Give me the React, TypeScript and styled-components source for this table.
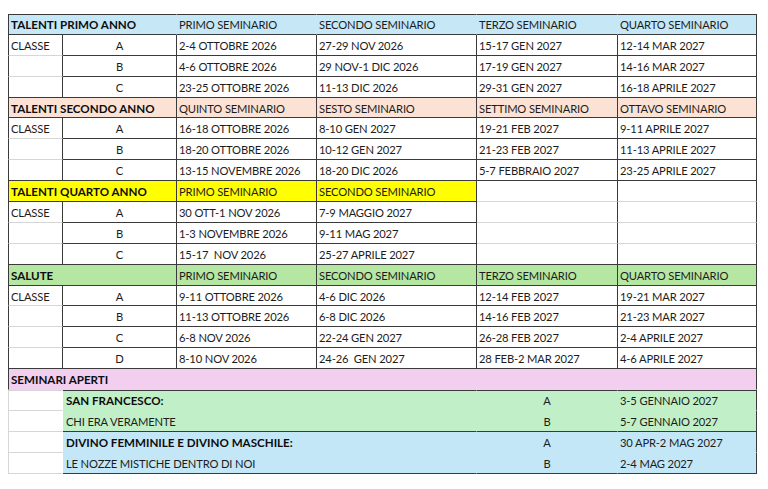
import React from "react";
import styled, { createGlobalStyle } from "styled-components";

const DARK = "#3a3a3a";
const LIGHT = "#d6d6d6";

type Edge = "dark" | "light" | "none";
const edge = (e?: Edge) =>
  e === "dark" ? `1px solid ${DARK}` : e === "light" ? `1px solid ${LIGHT}` : "1px solid transparent";

const Global = createGlobalStyle`
  html, body { margin: 0; padding: 0; background: #ffffff; }
  body { font-family: Lato, "Open Sans", "Liberation Sans", sans-serif; }
`;

const Page = styled.div`
  padding: 14px 0 0 8px;
  width: 768px;
  height: 489px;
  box-sizing: border-box;
`;

const Sheet = styled.div`
  display: grid;
  grid-template-columns: 55px 114px 140px 160px 141px 139px;
  grid-auto-rows: 20.9px;
  width: 749px;
`;

type CellProps = {
  $span?: number;
  $bg?: string;
  $bold?: boolean;
  $center?: boolean;
  $right?: Edge;
  $bottom?: Edge;
  $left?: Edge;
  $top?: Edge;
  $indent?: number;
};

const Cell = styled.div<CellProps>`
  grid-column: span ${(p) => p.$span ?? 1};
  background: ${(p) => p.$bg ?? "#ffffff"};
  border-right: ${(p) => edge(p.$right)};
  border-bottom: ${(p) => edge(p.$bottom)};
  border-left: ${(p) => (p.$left ? edge(p.$left) : "none")};
  border-top: ${(p) => (p.$top ? edge(p.$top) : "none")};
  box-sizing: border-box;
  display: flex;
  align-items: center;
  justify-content: ${(p) => (p.$center ? "center" : "flex-start")};
  padding: 1px 0 0 ${(p) => p.$indent ?? 2}px;
  font-size: ${(p) => (p.$bold ? "11.6px" : "11.2px")};
  font-weight: ${(p) => (p.$bold ? 700 : 400)};
  color: ${(p) => (p.$bold ? "#0d0d0d" : "#1c1c1c")};
  white-space: pre;
  overflow: hidden;
  letter-spacing: ${(p) => (p.$bold ? "0" : "-0.15px")};
`;

type Section = {
  title: string;
  bg: string;
  innerLines: boolean;
  headers: string[];
  rows: { letter: string; dates: string[] }[];
};

const sections: Section[] = [
  {
    title: "TALENTI PRIMO ANNO",
    bg: "#C6E7F6",
    innerLines: false,
    headers: ["PRIMO SEMINARIO", "SECONDO SEMINARIO", "TERZO SEMINARIO", "QUARTO SEMINARIO"],
    rows: [
      { letter: "A", dates: ["2-4 OTTOBRE 2026", "27-29 NOV 2026", "15-17 GEN 2027", "12-14 MAR 2027"] },
      { letter: "B", dates: ["4-6 OTTOBRE 2026", "29 NOV-1 DIC 2026", "17-19 GEN 2027", "14-16 MAR 2027"] },
      { letter: "C", dates: ["23-25 OTTOBRE 2026", "11-13 DIC 2026", "29-31 GEN 2027", "16-18 APRILE 2027"] },
    ],
  },
  {
    title: "TALENTI SECONDO ANNO",
    bg: "#FBE2D5",
    innerLines: true,
    headers: ["QUINTO SEMINARIO", "SESTO SEMINARIO", "SETTIMO SEMINARIO", "OTTAVO SEMINARIO"],
    rows: [
      { letter: "A", dates: ["16-18 OTTOBRE 2026", "8-10 GEN 2027", "19-21 FEB 2027", "9-11 APRILE 2027"] },
      { letter: "B", dates: ["18-20 OTTOBRE 2026", "10-12 GEN 2027", "21-23 FEB 2027", "11-13 APRILE 2027"] },
      { letter: "C", dates: ["13-15 NOVEMBRE 2026", "18-20 DIC 2026", "5-7 FEBBRAIO 2027", "23-25 APRILE 2027"] },
    ],
  },
  {
    title: "TALENTI QUARTO ANNO",
    bg: "#FFFF00",
    innerLines: true,
    headers: ["PRIMO SEMINARIO", "SECONDO SEMINARIO"],
    rows: [
      { letter: "A", dates: ["30 OTT-1 NOV 2026", "7-9 MAGGIO 2027"] },
      { letter: "B", dates: ["1-3 NOVEMBRE 2026", "9-11 MAG 2027"] },
      { letter: "C", dates: ["15-17  NOV 2026", "25-27 APRILE 2027"] },
    ],
  },
  {
    title: "SALUTE",
    bg: "#B5E6A2",
    innerLines: true,
    headers: ["PRIMO SEMINARIO", "SECONDO SEMINARIO", "TERZO SEMINARIO", "QUARTO SEMINARIO"],
    rows: [
      { letter: "A", dates: ["9-11 OTTOBRE 2026", "4-6 DIC 2026", "12-14 FEB 2027", "19-21 MAR 2027"] },
      { letter: "B", dates: ["11-13 OTTOBRE 2026", "6-8 DIC 2026", "14-16 FEB 2027", "21-23 MAR 2027"] },
      { letter: "C", dates: ["6-8 NOV 2026", "22-24 GEN 2027", "26-28 FEB 2027", "2-4 APRILE 2027"] },
      { letter: "D", dates: ["8-10 NOV 2026", "24-26  GEN 2027", "28 FEB-2 MAR 2027", "4-6 APRILE 2027"] },
    ],
  },
];

type Open = {
  bg: string;
  title: string;
  subtitle: string;
  dates: [string, string];
};

const openSeminars: Open[] = [
  { bg: "#C1F0C8", title: "SAN FRANCESCO:", subtitle: "CHI ERA VERAMENTE", dates: ["3-5 GENNAIO 2027", "5-7 GENNAIO 2027"] },
  {
    bg: "#C3E7F7",
    title: "DIVINO FEMMINILE E DIVINO MASCHILE:",
    subtitle: "LE NOZZE MISTICHE DENTRO DI NOI",
    dates: ["30 APR-2 MAG 2027", "2-4 MAG 2027"],
  },
];

function SectionRows({ s, first }: { s: Section; first: boolean }) {
  const top: Edge | undefined = first ? "dark" : undefined;
  const filler = 4 - s.headers.length;
  return (
    <>
      <Cell $span={2} $bg={s.bg} $bold $left="dark" $top={top} $bottom="dark" $right={s.innerLines ? "dark" : "none"}>
        {s.title}
      </Cell>
      {s.headers.map((h, i) => (
        <Cell
          key={h + i}
          $bg={s.bg}
          $top={top}
          $bottom="dark"
          $right={s.innerLines || (i === 3 && filler === 0) ? "dark" : "none"}
        >
          {h}
        </Cell>
      ))}
      {Array.from({ length: filler }).map((_, i) => (
        <Cell key={"hf" + i} $bottom="light" $right="dark" />
      ))}
      {s.rows.map((r, ri) => {
        const last = ri === s.rows.length - 1;
        return (
          <React.Fragment key={r.letter}>
            <Cell $left="dark" $right="dark" $bottom={last ? "dark" : "light"}>
              {ri === 0 ? "CLASSE" : ""}
            </Cell>
            <Cell $center $right="dark" $bottom="dark" $indent={0}>
              {r.letter}
            </Cell>
            {r.dates.map((d, di) => (
              <Cell key={di} $right="dark" $bottom="dark">
                {d}
              </Cell>
            ))}
            {Array.from({ length: filler }).map((_, i) => (
              <Cell key={"rf" + i} $right="dark" $bottom={last ? "dark" : "light"} />
            ))}
          </React.Fragment>
        );
      })}
    </>
  );
}

export default function App() {
  return (
    <Page>
      <Global />
      <Sheet>
        {sections.map((s, i) => (
          <SectionRows key={s.title} s={s} first={i === 0} />
        ))}
        <Cell $span={6} $bg="#F2CEEF" $bold $left="dark" $right="dark" $bottom="none">
          SEMINARI APERTI
        </Cell>
        {openSeminars.map((o, oi) => (
          <React.Fragment key={o.title}>
            <Cell $left="light" $right="none" $bottom="light" $top={oi === 0 ? "light" : undefined} />
            <Cell $span={3} $bg={o.bg} $bold $indent={3} $top={oi === 0 ? "dark" : undefined}>
              {o.title}
            </Cell>
            <Cell $bg={o.bg} $center $indent={0} $top={oi === 0 ? "dark" : undefined}>
              A
            </Cell>
            <Cell $bg={o.bg} $right="dark" $top={oi === 0 ? "dark" : undefined}>
              {o.dates[0]}
            </Cell>
            <Cell $left="light" $right="none" $bottom="light" />
            <Cell $span={3} $bg={o.bg} $indent={3} $bottom="dark">
              {o.subtitle}
            </Cell>
            <Cell $bg={o.bg} $center $indent={0} $bottom="dark">
              B
            </Cell>
            <Cell $bg={o.bg} $right="dark" $bottom="dark">
              {o.dates[1]}
            </Cell>
          </React.Fragment>
        ))}
      </Sheet>
    </Page>
  );
}
